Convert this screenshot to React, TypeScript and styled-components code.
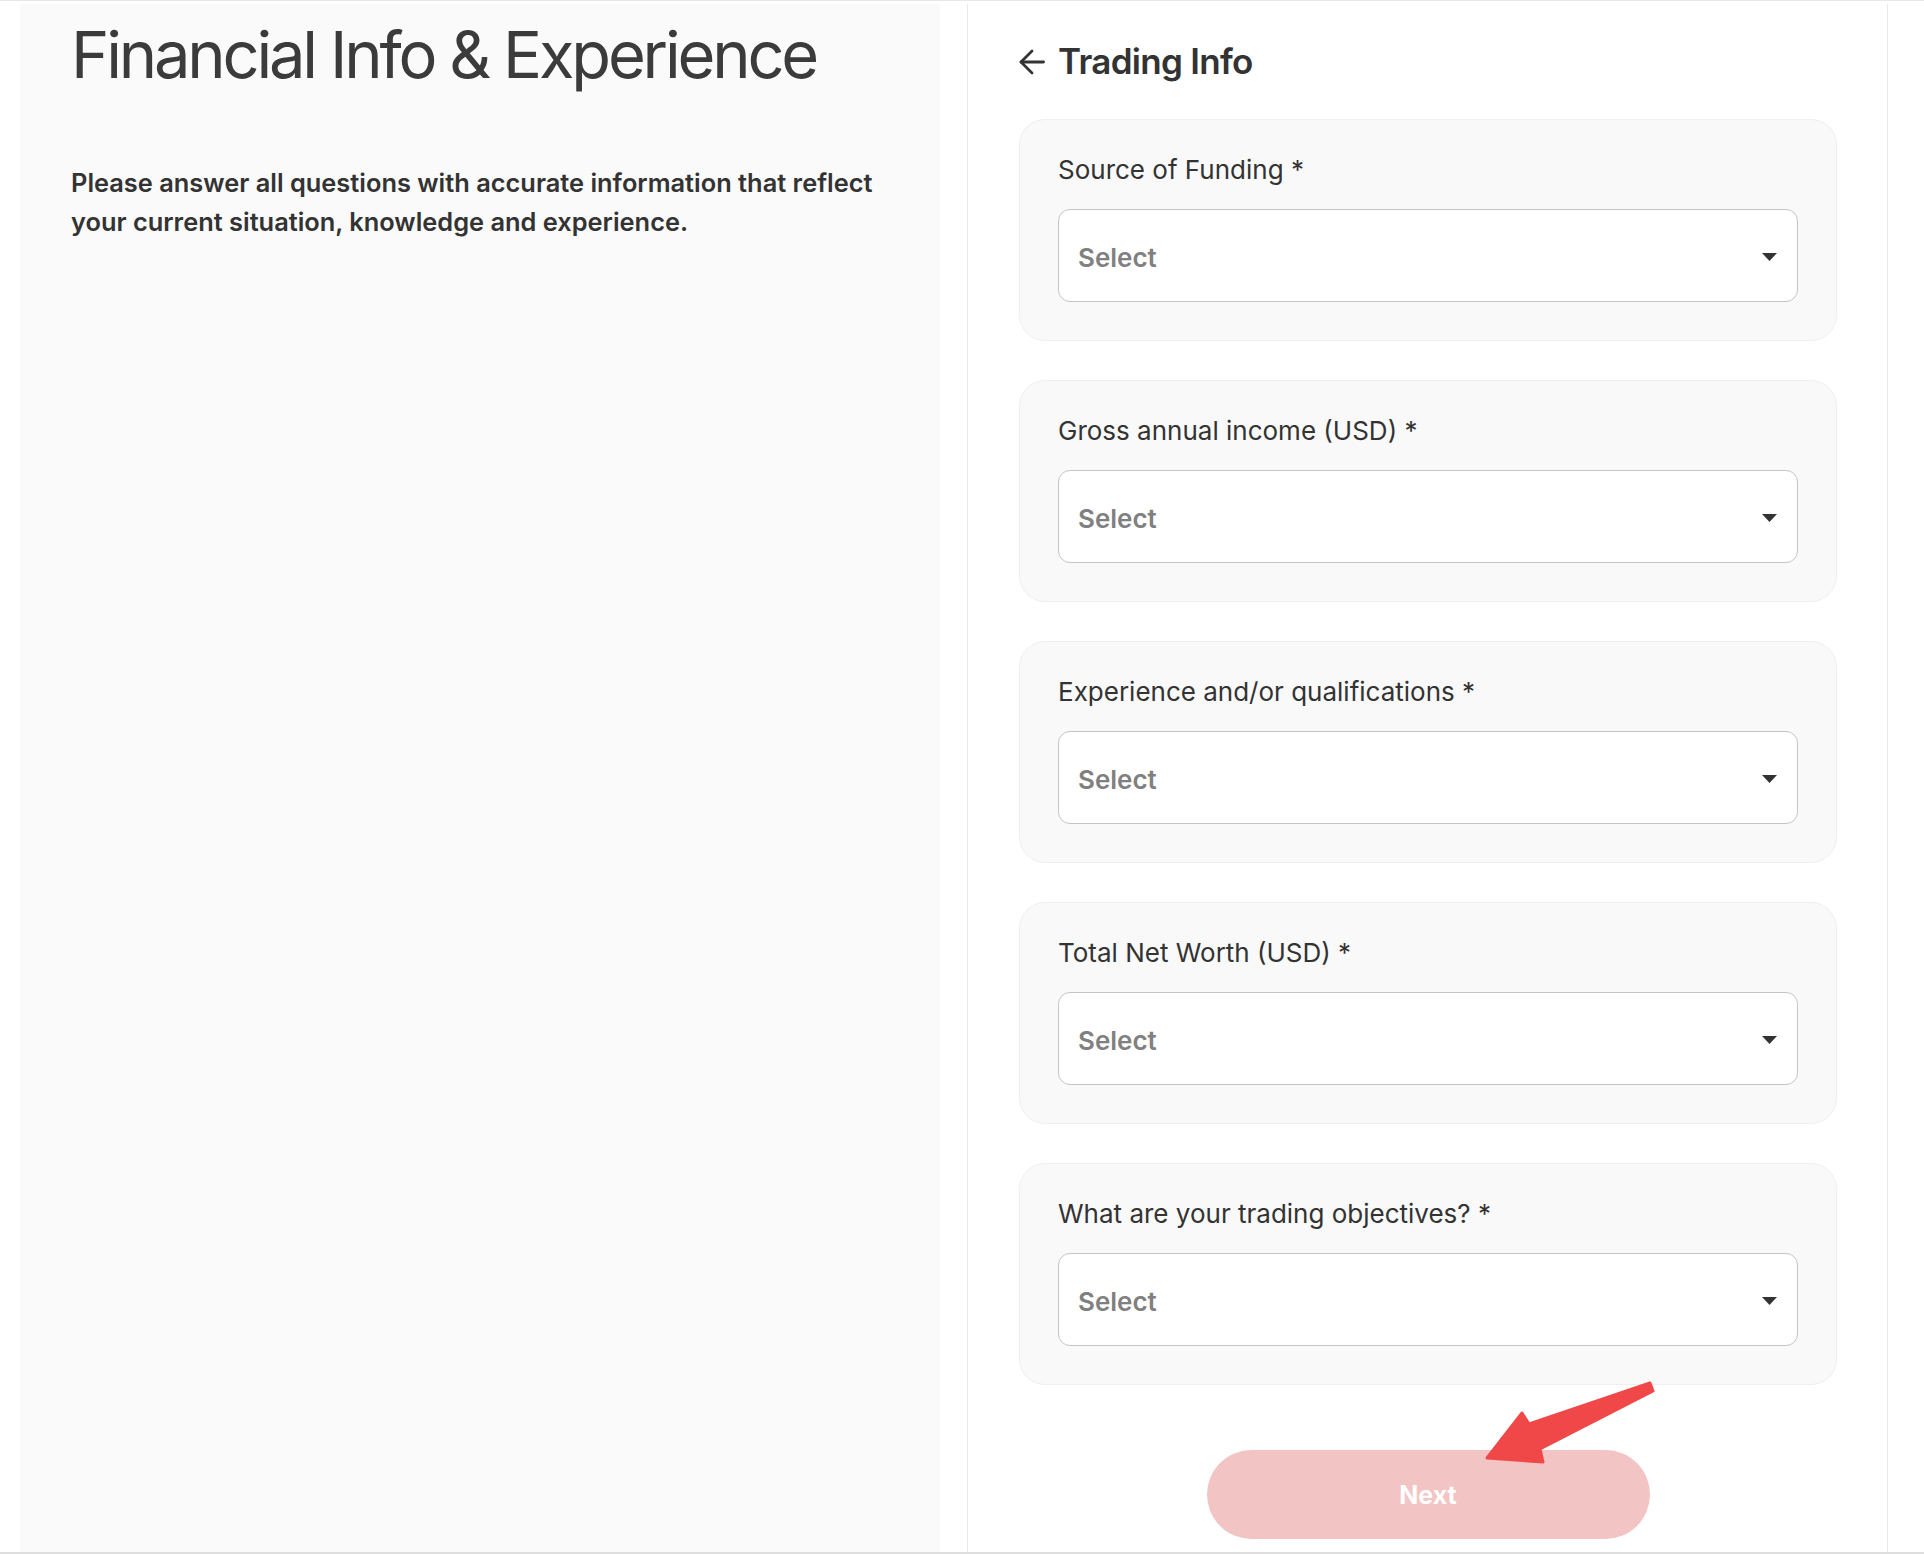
import React from 'react';
import styled, { createGlobalStyle } from 'styled-components';

const GlobalStyle = createGlobalStyle`
  html, body {
    margin: 0;
    padding: 0;
    background: #fff;
  }
  body {
    font-family: 'Inter', 'Noto Sans', 'Liberation Sans', sans-serif;
    color: #333;
  }
  * {
    box-sizing: border-box;
  }
`;

const Page = styled.div`
  position: relative;
  height: 1554px;
  border-top: 1px solid #e8e8e8;
  border-bottom: 2px solid #dedede;
  padding: 3px 0 0 20px;
  display: grid;
  grid-template-columns: 920px 921px;
  column-gap: 27px;
`;

const IntroPanel = styled.section`
  background: #fafafa;
  padding: 11px 51px 0;
`;

const Title = styled.h1`
  margin: 0;
  font-size: 65px;
  line-height: 80px;
  font-weight: 400;
  color: #3b3b3b;
  letter-spacing: -0.049em;
  white-space: nowrap;
`;

const Intro = styled.p`
  margin: 68px 0 0;
  font-size: 25.4px;
  line-height: 39px;
  font-weight: 600;
  color: #333;
`;

const FormPanel = styled.section`
  border-left: 1px solid #e8e8e8;
  border-right: 1px solid #e8e8e8;
  padding: 35px 50px 0 51px;
  display: flex;
  flex-direction: column;
`;

const Heading = styled.div`
  display: flex;
  align-items: center;
  gap: 13px;
  height: 44px;
  font-size: 35px;
  line-height: 44px;
  font-weight: 600;
  letter-spacing: -0.02em;
  color: #333;
  margin-bottom: 36px;
`;

const BackIcon = styled.svg`
  width: 26px;
  height: 26px;
  flex: none;
  margin-top: 2px;
`;

const Fields = styled.div`
  display: flex;
  flex-direction: column;
  gap: 39px;
`;

const FieldCard = styled.div`
  background: #f9f9f9;
  border: 1px solid #efefef;
  border-radius: 26px;
  padding: 34px 38px 38px;
`;

const Label = styled.div`
  font-size: 26px;
  line-height: 32px;
  font-weight: 400;
  color: #333;
  margin-bottom: 23px;
`;

const SelectBox = styled.div`
  height: 93px;
  background: #fff;
  border: 1px solid #c4c4c4;
  border-radius: 12px;
  padding: 0 20px 0 19px;
  display: flex;
  align-items: center;
  justify-content: space-between;
  cursor: pointer;
`;

const Placeholder = styled.span`
  font-size: 26px;
  font-weight: 600;
  color: #808080;
  padding-top: 3px;
`;

const Caret = styled.svg`
  width: 15px;
  height: 8px;
  flex: none;
  margin-top: 2px;
`;

const Actions = styled.div`
  display: flex;
  justify-content: center;
  margin-top: 65px;
`;

const NextButton = styled.button`
  width: 443px;
  height: 89px;
  border: none;
  border-radius: 45px;
  background: #f2c4c4;
  color: #fff;
  font-family: inherit;
  font-size: 25px;
  font-weight: 700;
  cursor: not-allowed;
`;

const Annotation = styled.svg`
  position: absolute;
  left: 1480px;
  top: 1374px;
  width: 180px;
  height: 95px;
  pointer-events: none;
`;

const fields = [
  'Source of Funding *',
  'Gross annual income (USD) *',
  'Experience and/or qualifications *',
  'Total Net Worth (USD) *',
  'What are your trading objectives? *',
];

const Field = ({ label }: { label: string }) => (
  <FieldCard>
    <Label>{label}</Label>
    <SelectBox role="combobox">
      <Placeholder>Select</Placeholder>
      <Caret viewBox="0 0 15 8">
        <polygon points="0,0 15,0 7.5,8" fill="#333" />
      </Caret>
    </SelectBox>
  </FieldCard>
);

export default function App() {
  return (
    <>
      <GlobalStyle />
      <Page>
        <IntroPanel>
          <Title>Financial Info &amp; Experience</Title>
          <Intro>
            Please answer all questions with accurate information that reflect
            your current situation, knowledge and experience.
          </Intro>
        </IntroPanel>
        <FormPanel>
          <Heading>
            <BackIcon viewBox="0 0 26 26" fill="none" stroke="#333" strokeWidth="2.8" strokeLinecap="round" strokeLinejoin="round">
              <path d="M24.5 13H2" />
              <path d="M13 2 2 13l11 11" />
            </BackIcon>
            Trading Info
          </Heading>
          <Fields>
            {fields.map((f) => (
              <Field key={f} label={f} />
            ))}
          </Fields>
          <Actions>
            <NextButton type="button">Next</NextButton>
          </Actions>
        </FormPanel>
        <Annotation viewBox="0 0 180 95">
          <polygon
            points="170,8 173,16 60,74 63,87 7,83 42,38 49,49"
            fill="#f04848"
            stroke="#f04848"
            strokeWidth="3"
            strokeLinejoin="round"
          />
        </Annotation>
      </Page>
    </>
  );
}
